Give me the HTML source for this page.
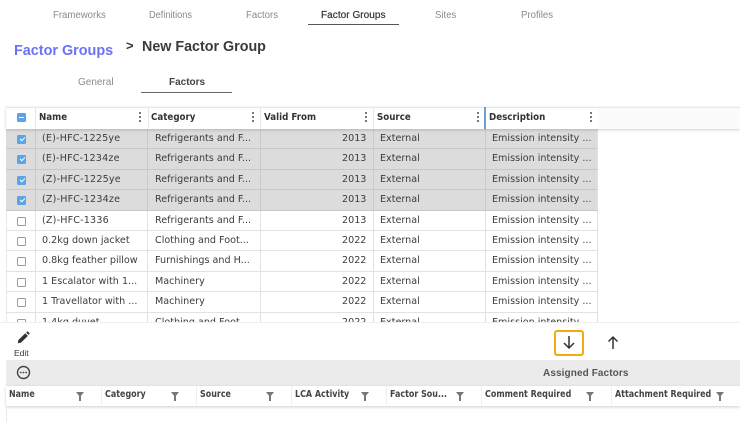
<!DOCTYPE html>
<html><head><meta charset="utf-8">
<style>
html,body{margin:0;padding:0;background:#fff;}
#p{position:relative;width:740px;height:422px;overflow:hidden;background:#fff;font-family:"DejaVu Sans",sans-serif;filter:blur(0.25px);}
.a{position:absolute;white-space:nowrap;}
.nav{font:10px/14px "Liberation Sans",sans-serif;color:#8a8a8a;top:8.5px;transform:scaleX(.96);transform-origin:left center;}
.h{font:bold 10px/14px "DejaVu Sans",sans-serif;color:#333;top:111px;transform:scaleX(.87);transform-origin:left center;}
.d{position:absolute;top:112px;width:2px;height:2px;background:#777;box-shadow:0 4px 0 #777,0 8px 0 #777;}
.r{position:absolute;left:6px;width:592px;height:20.4px;box-sizing:border-box;border-bottom:1px solid #e2e2e2;border-left:1px solid #e8e8e8;border-right:1px solid #e2e2e2;background:#fff;}
.r.s{background:#dcdcdc;border-bottom-color:#c8c8c8;border-left-color:#dcdcdc;}
.r span{position:absolute;top:0;font-size:9.6px;line-height:20px;color:#3c3c3c;white-space:nowrap;}
.r span.w{letter-spacing:.17px;}
.r i{position:absolute;top:0;width:1px;height:20px;background:#e2e2e2;}
.r.s i{background:#c9c9c9;}
.c{position:absolute;left:10px;top:6px;width:7px;height:7px;border:1px solid #9a9a9a;border-radius:1.5px;background:#fff;}
.s .c{border:0;width:9px;height:9px;left:10px;top:6px;background:#5ba4e6;padding:0;}
.s .c:after{content:"";position:absolute;left:2.5px;top:2px;width:4px;height:2px;border-left:1px solid #fff;border-bottom:1px solid #fff;transform:rotate(-45deg);}
.f{font:bold 9.4px/14px "DejaVu Sans",sans-serif;color:#444;top:387.5px;transform:scaleX(.85);transform-origin:left center;}
.t{position:absolute;top:392px;width:0;height:0;border-left:4.5px solid transparent;border-right:4.5px solid transparent;border-top:5px solid #777;}
.t:after{content:"";position:absolute;left:-1px;top:-1px;width:2px;height:5px;background:#777;}
.l{position:absolute;top:386px;width:1px;height:19px;background:#f0f0f0;}
</style></head><body><div id="p">
<div class="a nav" style="left:53px">Frameworks</div>
<div class="a nav" style="left:149px;transform:scaleX(.92)">Definitions</div>
<div class="a nav" style="left:246px">Factors</div>
<div class="a nav" style="left:321px;color:#333;transform:none;letter-spacing:.05px;-webkit-text-stroke:.2px #333">Factor Groups</div>
<div class="a nav" style="left:435px">Sites</div>
<div class="a nav" style="left:521px">Profiles</div>
<div class="a" style="left:308px;top:24px;width:91px;height:1px;background:#555"></div>

<div class="a" style="left:14px;top:42px;font:bold 14.4px/18px 'Liberation Sans',sans-serif;color:#6a72f5">Factor Groups</div>
<div class="a" style="left:126px;top:38px;font:bold 13px/16px 'Liberation Sans',sans-serif;color:#333">&gt;</div>
<div class="a" style="left:142px;top:39px;font:bold 14.3px/17px 'Liberation Sans',sans-serif;color:#3a3a3a">New Factor Group</div>

<div class="a nav" style="left:78px;top:75.5px;color:#8a8a8a;transform:none">General</div>
<div class="a nav" style="left:169px;top:75.5px;color:#444;font-weight:bold;transform:none">Factors</div>
<div class="a" style="left:141px;top:91.5px;width:91px;height:1px;background:#666"></div>

<!-- rows -->
<div class="r s" style="top:129px"><b class="c"></b><i style="left:28px"></i><span class="w" style="left:35px">(E)-HFC-1225ye</span><i style="left:140px"></i><span style="left:148px">Refrigerants and F...</span><i style="left:253px"></i><span style="left:335px">2013</span><i style="left:366px"></i><span style="left:373px">External</span><i style="left:478px"></i><span style="left:485px">Emission intensity ...</span></div>
<div class="r s" style="top:149.4px"><b class="c"></b><i style="left:28px"></i><span class="w" style="left:35px">(E)-HFC-1234ze</span><i style="left:140px"></i><span style="left:148px">Refrigerants and F...</span><i style="left:253px"></i><span style="left:335px">2013</span><i style="left:366px"></i><span style="left:373px">External</span><i style="left:478px"></i><span style="left:485px">Emission intensity ...</span></div>
<div class="r s" style="top:169.8px"><b class="c"></b><i style="left:28px"></i><span class="w" style="left:35px">(Z)-HFC-1225ye</span><i style="left:140px"></i><span style="left:148px">Refrigerants and F...</span><i style="left:253px"></i><span style="left:335px">2013</span><i style="left:366px"></i><span style="left:373px">External</span><i style="left:478px"></i><span style="left:485px">Emission intensity ...</span></div>
<div class="r s" style="top:190.2px"><b class="c"></b><i style="left:28px"></i><span class="w" style="left:35px">(Z)-HFC-1234ze</span><i style="left:140px"></i><span style="left:148px">Refrigerants and F...</span><i style="left:253px"></i><span style="left:335px">2013</span><i style="left:366px"></i><span style="left:373px">External</span><i style="left:478px"></i><span style="left:485px">Emission intensity ...</span></div>
<div class="r" style="top:210.6px"><b class="c"></b><i style="left:28px"></i><span class="w" style="left:35px">(Z)-HFC-1336</span><i style="left:140px"></i><span style="left:148px">Refrigerants and F...</span><i style="left:253px"></i><span style="left:335px">2013</span><i style="left:366px"></i><span style="left:373px">External</span><i style="left:478px"></i><span style="left:485px">Emission intensity ...</span></div>
<div class="r" style="top:231px"><b class="c"></b><i style="left:28px"></i><span style="left:35px">0.2kg down jacket</span><i style="left:140px"></i><span style="left:148px">Clothing and Foot...</span><i style="left:253px"></i><span style="left:335px">2022</span><i style="left:366px"></i><span style="left:373px">External</span><i style="left:478px"></i><span style="left:485px">Emission intensity ...</span></div>
<div class="r" style="top:251.4px"><b class="c"></b><i style="left:28px"></i><span style="left:35px">0.8kg feather pillow</span><i style="left:140px"></i><span style="left:148px">Furnishings and H...</span><i style="left:253px"></i><span style="left:335px">2022</span><i style="left:366px"></i><span style="left:373px">External</span><i style="left:478px"></i><span style="left:485px">Emission intensity ...</span></div>
<div class="r" style="top:271.8px"><b class="c"></b><i style="left:28px"></i><span style="left:35px">1 Escalator with 1...</span><i style="left:140px"></i><span style="left:148px">Machinery</span><i style="left:253px"></i><span style="left:335px">2022</span><i style="left:366px"></i><span style="left:373px">External</span><i style="left:478px"></i><span style="left:485px">Emission intensity ...</span></div>
<div class="r" style="top:292.2px"><b class="c"></b><i style="left:28px"></i><span style="left:35px">1 Travellator with ...</span><i style="left:140px"></i><span style="left:148px">Machinery</span><i style="left:253px"></i><span style="left:335px">2022</span><i style="left:366px"></i><span style="left:373px">External</span><i style="left:478px"></i><span style="left:485px">Emission intensity ...</span></div>
<div class="r" style="top:312.6px"><b class="c"></b><i style="left:28px"></i><span style="left:35px">1.4kg duvet</span><i style="left:140px"></i><span style="left:148px">Clothing and Foot...</span><i style="left:253px"></i><span style="left:335px">2022</span><i style="left:366px"></i><span style="left:373px">External</span><i style="left:478px"></i><span style="left:485px">Emission intensity ...</span></div>

<!-- header -->
<div class="a" style="left:6px;top:107px;width:734px;height:21px;background:#fbfbfb;border-top:1px solid #e8e8e8;box-shadow:0 1px 3px rgba(0,0,0,.18)"></div>
<div class="a" style="left:7px;top:108px;width:591px;height:21px;background:#fff"></div>
<div class="a" style="left:35px;top:108px;width:1px;height:20px;background:#e8e8e8"></div>
<div class="a" style="left:148px;top:108px;width:1px;height:20px;background:#e8e8e8"></div>
<div class="a" style="left:260px;top:108px;width:1px;height:20px;background:#e8e8e8"></div>
<div class="a" style="left:373px;top:108px;width:1px;height:20px;background:#e8e8e8"></div>
<div class="a" style="left:484px;top:107px;width:2px;height:22px;background:#6f9fd0"></div>
<div class="a" style="left:17px;top:113px;width:9px;height:9px;background:#5ba4e6;border-radius:1.5px"></div>
<div class="a" style="left:19px;top:117px;width:5px;height:1.3px;background:#fff"></div>
<div class="a h" style="left:39px">Name</div><div class="d" style="left:139px"></div>
<div class="a h" style="left:151px">Category</div><div class="d" style="left:252px"></div>
<div class="a h" style="left:264px">Valid From</div><div class="d" style="left:365px"></div>
<div class="a h" style="left:377px">Source</div><div class="d" style="left:477px"></div>
<div class="a h" style="left:489px">Description</div><div class="d" style="left:590px"></div>

<!-- lower panel -->
<div class="a" style="left:0;top:321.5px;width:740px;height:101px;background:#fff;border-top:1px solid #eee"></div>
<svg class="a" style="left:16.5px;top:330.5px" width="13" height="13" viewBox="0 0 16 16"><path d="M1 15 L1.6 11.2 L10.2 2.8 L13.4 6 L4.8 14.4 Z M11.2 1.8 L12.4 .7 Q13 .2 13.6 .7 L15.3 2.4 Q15.8 3 15.3 3.6 L14.2 4.8 Z" fill="#333"/></svg>
<div class="a" style="left:14px;top:347px;font:8.5px/12px 'Liberation Sans',sans-serif;color:#333">Edit</div>

<div class="a" style="left:553.5px;top:330px;width:30.5px;height:25.5px;box-sizing:border-box;border:2.5px solid #f5a90f;border-radius:3px"></div>
<svg class="a" style="left:561px;top:335px" width="16" height="15" viewBox="0 0 16 15"><path d="M8 1 V13 M3 8 L8 13 L13 8" fill="none" stroke="#333" stroke-width="1.5"/></svg>
<svg class="a" style="left:605px;top:335px" width="16" height="15" viewBox="0 0 16 15"><path d="M8 14 V2 M3.5 6.5 L8 2 L12.5 6.5" fill="none" stroke="#333" stroke-width="1.5"/></svg>

<div class="a" style="left:6px;top:360px;width:734px;height:25.5px;background:#ebebeb"></div>
<svg class="a" style="left:16px;top:365px" width="15" height="15" viewBox="0 0 15 15"><circle cx="7.5" cy="7.5" r="6" fill="none" stroke="#444" stroke-width="1.4"/><circle cx="4.8" cy="7.5" r=".9" fill="#444"/><circle cx="7.5" cy="7.5" r=".9" fill="#444"/><circle cx="10.2" cy="7.5" r=".9" fill="#444"/></svg>
<div class="a" style="left:543px;top:367px;font:bold 10px/14px 'Liberation Sans',sans-serif;color:#555;letter-spacing:.1px">Assigned Factors</div>

<div class="a" style="left:6px;top:386px;width:734px;height:19.5px;background:#fff;box-shadow:0 1px 3px rgba(0,0,0,.2)"></div>
<div class="a" style="left:6px;top:406px;width:1px;height:16px;background:#e8e8e8"></div>
<div class="l" style="left:101px"></div><div class="l" style="left:196px"></div><div class="l" style="left:291px"></div><div class="l" style="left:386px"></div><div class="l" style="left:481px"></div><div class="l" style="left:611px"></div>
<div class="a f" style="left:9px">Name</div><div class="t" style="left:76px"></div>
<div class="a f" style="left:105px">Category</div><div class="t" style="left:171px"></div>
<div class="a f" style="left:200px">Source</div><div class="t" style="left:266px"></div>
<div class="a f" style="left:295px">LCA Activity</div><div class="t" style="left:361px"></div>
<div class="a f" style="left:390px">Factor Sou...</div><div class="t" style="left:456px"></div>
<div class="a f" style="left:485px">Comment Required</div><div class="t" style="left:586px"></div>
<div class="a f" style="left:615px">Attachment Required</div><div class="t" style="left:716px"></div>
</div></body></html>
